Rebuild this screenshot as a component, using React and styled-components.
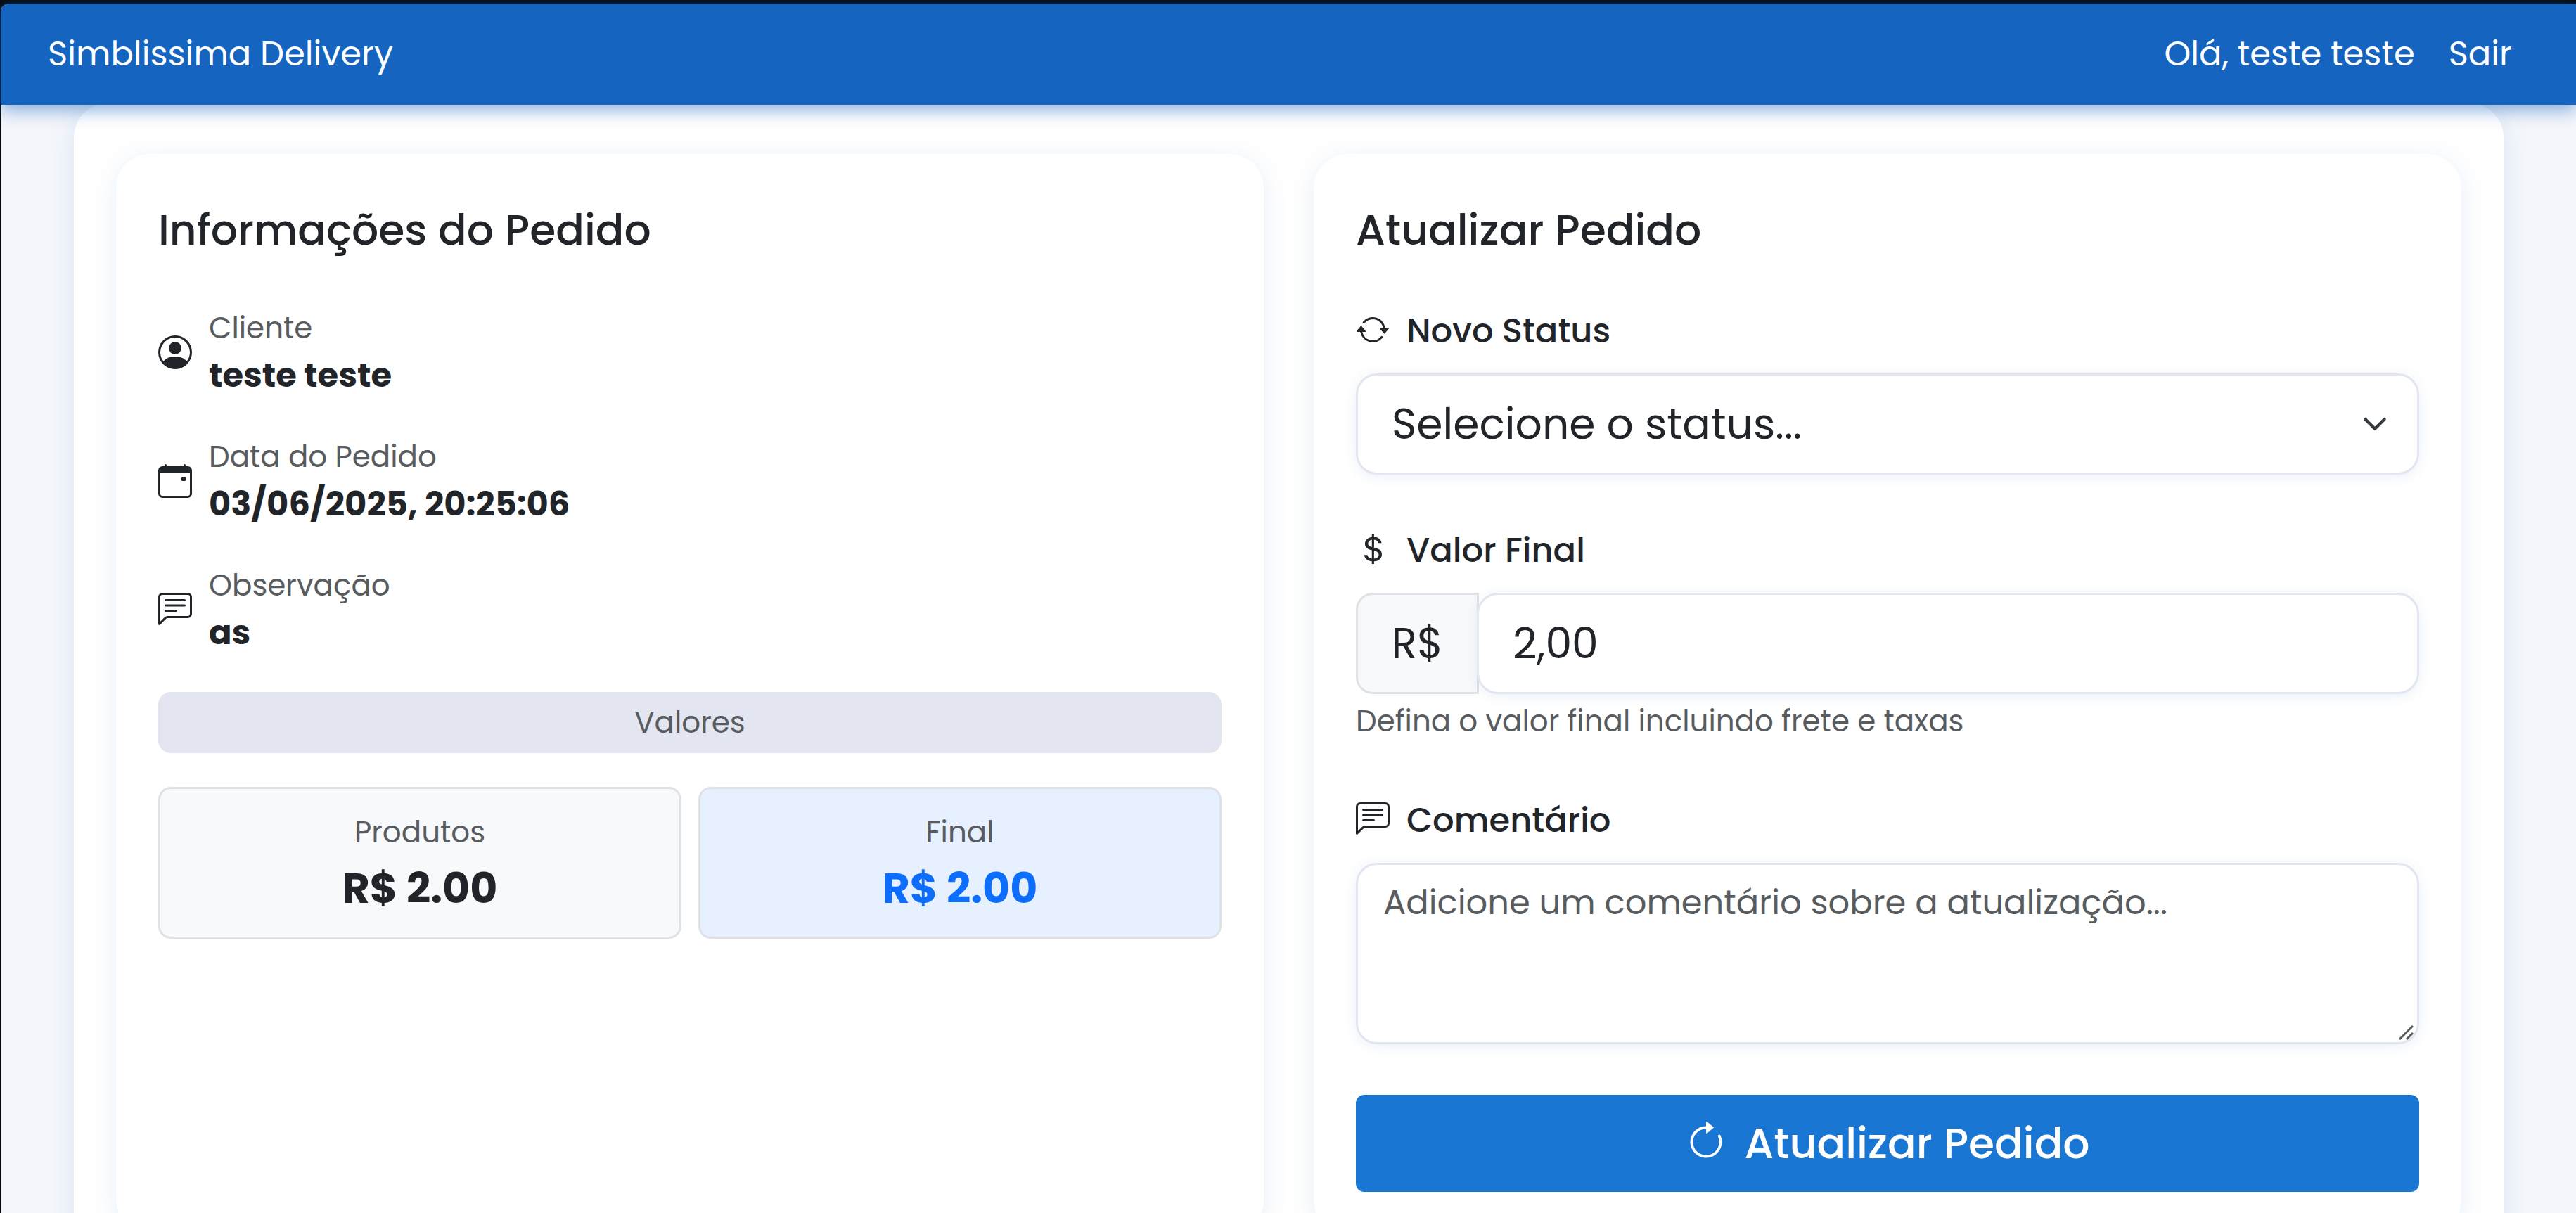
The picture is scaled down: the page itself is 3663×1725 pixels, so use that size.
import React, { useState } from "react";
import styled, { createGlobalStyle } from "styled-components";
import {
  BsArrowClockwise,
  BsArrowRepeat,
  BsCalendarEvent,
  BsChatLeftText,
  BsCurrencyDollar,
  BsPersonCircle,
} from "react-icons/bs";

const color = {
  text: "#212529",
  muted: "#585c5f",
  line: "#e3e6f0",
  border: "#dee2e6",
  soft: "#f8f9fb",
  page: "#f4f6fb",
  nav: "#1565c0",
  action: "#1976d2",
  accent: "#0d6efd",
};

const GlobalStyle = createGlobalStyle`
  *, *::before, *::after { box-sizing: border-box; }
  html { background: #0a0a0a; }
  body {
    margin: 0;
    color: ${color.text};
    font-family: Poppins, Inter, "Open Sans", sans-serif;
    font-size: 48px;
    line-height: 72px;
  }
  button, input, select, textarea { font: inherit; color: inherit; margin: 0; }
`;

const Frame = styled.div`
  border-top: 5px solid #0a0a0a;
  border-left: 1px solid #0a0a0a;
  background: #0a0a0a;
`;

const Page = styled.div`
  min-height: 100vh;
  padding-bottom: 48px;
  border-top-left-radius: 12px;
  background: ${color.page};
`;

const Navbar = styled.header`
  position: relative;
  z-index: 2;
  display: flex;
  align-items: center;
  justify-content: space-between;
  padding: 36px 91px 36px 67px;
  border-top-left-radius: 12px;
  background: ${color.nav};
  color: #fff;
  box-shadow: 0 6px 24px rgba(21, 101, 192, 0.5), 0 6px 36px rgba(21, 101, 192, 0.08);
`;

const NavLinks = styled.nav`
  display: flex;
  gap: 48px;
`;

const NavLink = styled.a`
  color: inherit;
  text-decoration: none;
`;

const Panel = styled.main`
  display: grid;
  grid-template-columns: repeat(2, minmax(0, 1fr));
  gap: 71px;
  margin: -2px 103px 0 104px;
  padding: 72px 60px 60px;
  border-radius: 48px;
  background: #fff;
  box-shadow: 0 6px 36px rgba(21, 101, 192, 0.11);
`;

const Card = styled.section`
  padding: 60px;
  border-radius: 48px;
  background: #fff;
  box-shadow: 0 6px 36px rgba(21, 101, 192, 0.1);
`;

const CardTitle = styled.h2`
  margin: 0 0 60px;
  font-size: 60px;
  font-weight: 500;
  line-height: 96px;
`;

const InfoList = styled.dl`
  display: grid;
  gap: 48px;
  margin: 0 0 48px;
`;

const InfoRow = styled.div`
  display: flex;
  align-items: center;
  gap: 24px;

  svg {
    flex: none;
    margin-bottom: 4px;
  }
`;

const InfoLabel = styled.dt`
  color: ${color.muted};
  font-size: 42px;
  line-height: 63px;
`;

const InfoValue = styled.dd`
  margin: 0;
  font-weight: 700;
`;

const ValuesHeading = styled.h3`
  margin: 0 0 48px;
  padding: 12px;
  border-radius: 18px;
  background: ${color.line};
  color: ${color.muted};
  font-size: 42px;
  font-weight: 400;
  line-height: 63px;
  text-align: center;
`;

const Values = styled.div`
  display: grid;
  grid-template-columns: repeat(2, minmax(0, 1fr));
  gap: 24px;
`;

const ValueBox = styled.div`
  padding: 24px 24px 27px;
  border: 3px solid ${color.border};
  border-radius: 18px;
  background: ${(p) => (p.$final ? "#e7f0ff" : color.soft)};
  text-align: center;
`;

const ValueName = styled.div`
  color: ${color.muted};
  font-size: 42px;
  line-height: 75px;
`;

const ValueAmount = styled.div`
  color: ${(p) => (p.$final ? color.accent : color.text)};
  font-size: 60px;
  font-weight: 700;
  line-height: 84px;
`;

const Form = styled.form`
  display: grid;
  gap: 72px;
`;

const Field = styled.div`
  display: flex;
  flex-direction: column;
`;

const FieldLabel = styled.label`
  display: flex;
  align-items: center;
  gap: 24px;
  margin-bottom: 24px;
  font-weight: 500;

  svg {
    flex: none;
    margin-bottom: 4px;
  }
`;

const controlLook = `
  display: block;
  width: 100%;
  border: 3px solid ${color.line};
  border-radius: 30px;
  background: #fff;
  box-shadow: 0 3px 18px rgba(21, 101, 192, 0.09);
  outline: none;
`;

const Overlay = styled.div`
  position: relative;

  svg {
    position: absolute;
    pointer-events: none;
  }
`;

const SelectOverlay = styled(Overlay)`
  svg {
    right: 45px;
    top: 54px;
  }
`;

const AreaOverlay = styled(Overlay)`
  svg {
    right: 3px;
    bottom: 3px;
  }
`;

const Select = styled.select`
  ${controlLook}
  height: 144px;
  padding: 0 120px 0 48px;
  font-size: 60px;
  appearance: none;
`;

const InputGroup = styled.div`
  display: flex;
`;

const Prefix = styled.span`
  flex: none;
  width: 175px;
  border: 3px solid ${color.border};
  border-radius: 24px 0 0 24px;
  background: ${color.soft};
  font-size: 60px;
  line-height: 138px;
  text-align: center;
`;

const Input = styled.input`
  ${controlLook}
  flex: 1;
  min-width: 0;
  height: 144px;
  margin-left: -3px;
  padding: 0 48px;
  font-size: 60px;
`;

const Help = styled.p`
  margin: 6px 0 0;
  color: ${color.muted};
  font-size: 42px;
  line-height: 66px;
`;

const TextArea = styled.textarea`
  ${controlLook}
  height: 258px;
  padding: 18px 36px;
  resize: none;

  &::placeholder { color: ${color.muted}; opacity: 1; }
`;

const Submit = styled.button`
  display: flex;
  align-items: center;
  justify-content: center;
  gap: 24px;
  height: 138px;
  border: 0;
  border-radius: 12px;
  background: ${color.action};
  color: #fff;
  font-size: 60px;
  font-weight: 500;

  svg {
    flex: none;
    margin-bottom: 4px;
  }
`;

const details = [
  { Icon: BsPersonCircle, label: "Cliente", value: "teste teste" },
  { Icon: BsCalendarEvent, label: "Data do Pedido", value: "03/06/2025, 20:25:06" },
  { Icon: BsChatLeftText, label: "Observação", value: "as" },
];

function OrderInfo() {
  return (
    <Card>
      <CardTitle>Informações do Pedido</CardTitle>
      <InfoList>
        {details.map(({ Icon, label, value }) => (
          <InfoRow key={label}>
            <Icon size={48} aria-hidden="true" />
            <div>
              <InfoLabel>{label}</InfoLabel>
              <InfoValue>{value}</InfoValue>
            </div>
          </InfoRow>
        ))}
      </InfoList>
      <ValuesHeading>Valores</ValuesHeading>
      <Values>
        <ValueBox>
          <ValueName>Produtos</ValueName>
          <ValueAmount>R$ 2.00</ValueAmount>
        </ValueBox>
        <ValueBox $final>
          <ValueName>Final</ValueName>
          <ValueAmount $final>R$ 2.00</ValueAmount>
        </ValueBox>
      </Values>
    </Card>
  );
}

function UpdateOrder() {
  const [status, setStatus] = useState("");
  const [amount, setAmount] = useState("2,00");
  const [comment, setComment] = useState("");

  return (
    <Card>
      <CardTitle>Atualizar Pedido</CardTitle>
      <Form onSubmit={(e) => e.preventDefault()}>
        <Field>
          <FieldLabel htmlFor="status">
            <BsArrowRepeat size={48} aria-hidden="true" />
            Novo Status
          </FieldLabel>
          <SelectOverlay>
            <Select id="status" value={status} onChange={(e) => setStatus(e.target.value)}>
              <option value="">Selecione o status...</option>
            </Select>
            <svg width="36" height="36" viewBox="0 0 16 16" aria-hidden="true">
              <path
                d="m2 5 6 6 6-6"
                fill="none"
                stroke="#343a40"
                strokeWidth="2"
                strokeLinecap="round"
                strokeLinejoin="round"
              />
            </svg>
          </SelectOverlay>
        </Field>
        <Field>
          <FieldLabel htmlFor="amount">
            <BsCurrencyDollar size={48} aria-hidden="true" />
            Valor Final
          </FieldLabel>
          <InputGroup>
            <Prefix>R$</Prefix>
            <Input
              id="amount"
              type="text"
              inputMode="decimal"
              aria-describedby="amount-help"
              value={amount}
              onChange={(e) => setAmount(e.target.value)}
            />
          </InputGroup>
          <Help id="amount-help">Defina o valor final incluindo frete e taxas</Help>
        </Field>
        <Field>
          <FieldLabel htmlFor="comment">
            <BsChatLeftText size={48} aria-hidden="true" />
            Comentário
          </FieldLabel>
          <AreaOverlay>
            <TextArea
              id="comment"
              placeholder="Adicione um comentário sobre a atualização..."
              value={comment}
              onChange={(e) => setComment(e.target.value)}
            />
            <svg width="27" height="27" viewBox="0 0 27 27" aria-hidden="true">
              <path d="M2 23 21 4M12 23l9-9" fill="none" stroke="#58595b" strokeWidth="3" />
            </svg>
          </AreaOverlay>
        </Field>
        <Submit type="submit">
          <BsArrowClockwise size={60} aria-hidden="true" />
          Atualizar Pedido
        </Submit>
      </Form>
    </Card>
  );
}

export default function App() {
  return (
    <>
      <GlobalStyle />
      <Frame>
        <Page>
          <Navbar>
            <NavLink href="#inicio">Simblissima Delivery</NavLink>
            <NavLinks>
              <span>Olá, teste teste</span>
              <NavLink href="#sair">Sair</NavLink>
            </NavLinks>
          </Navbar>
          <Panel>
            <OrderInfo />
            <UpdateOrder />
          </Panel>
        </Page>
      </Frame>
    </>
  );
}
